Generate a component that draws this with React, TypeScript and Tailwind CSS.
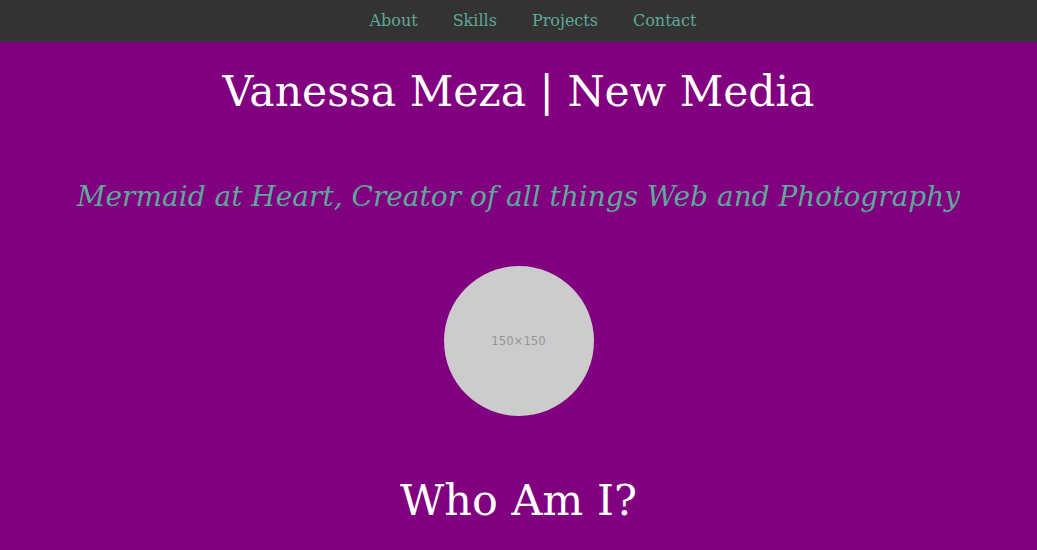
export default function App() {
  const links = ["About", "Skills", "Projects", "Contact"];
  return (
    <div className="min-h-[550px] w-full bg-[#800080] font-['DejaVu_Serif',serif] text-center">
      <nav className="h-[42px] bg-[#333333] flex items-center justify-center gap-[35px] pl-[29px]">
        {links.map((l) => (
          <a key={l} href="#" className="text-[16px] text-[#5fa89a]">
            {l}
          </a>
        ))}
      </nav>
      <h1 className="pt-[20px] text-[42.5px] leading-[60px] text-white">Vanessa Meza | New Media</h1>
      <h2 className="mt-[55px] text-[28px] leading-[40px] italic text-[#5fa89a]">
        Mermaid at Heart, Creator of all things Web and Photography
      </h2>
      <div className="mt-[49px] flex justify-center">
        <div className="w-[150px] h-[150px] rounded-full bg-[#cccccc] flex items-center justify-center">
          <span className="text-[13px] text-[#969696] font-['DejaVu_Sans_Condensed',sans-serif]">150×150</span>
        </div>
      </div>
      <h2 className="mt-[54px] text-[43px] leading-[60px] text-white">Who Am I?</h2>
    </div>
  );
}
